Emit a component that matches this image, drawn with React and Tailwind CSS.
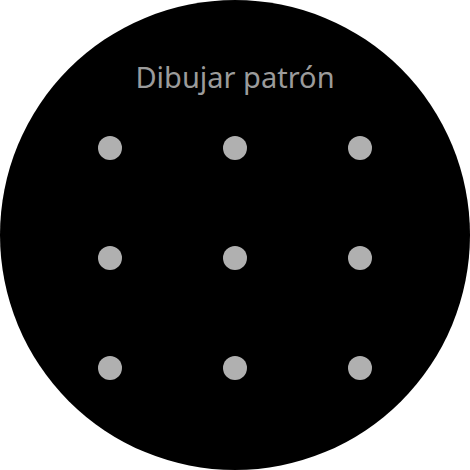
export default function App() {
  const dots = Array.from({ length: 9 });
  return (
    <div className="w-[470px] h-[470px] bg-white">
      <div className="w-[470px] h-[470px] rounded-full bg-black flex flex-col items-center">
        <div className="mt-[57px] h-[40px] leading-[40px] text-[29px] text-[#9b9b9b]" style={{ fontFamily: '"Noto Sans", sans-serif' }}>
          Dibujar patrón
        </div>
        <div className="mt-[39px] grid grid-cols-[24px_24px_24px] gap-x-[101px] gap-y-[86px]">
          {dots.map((_, i) => (
            <div key={i} className="w-[24px] h-[24px] rounded-full bg-[#b0b0b0]" />
          ))}
        </div>
      </div>
    </div>
  );
}
